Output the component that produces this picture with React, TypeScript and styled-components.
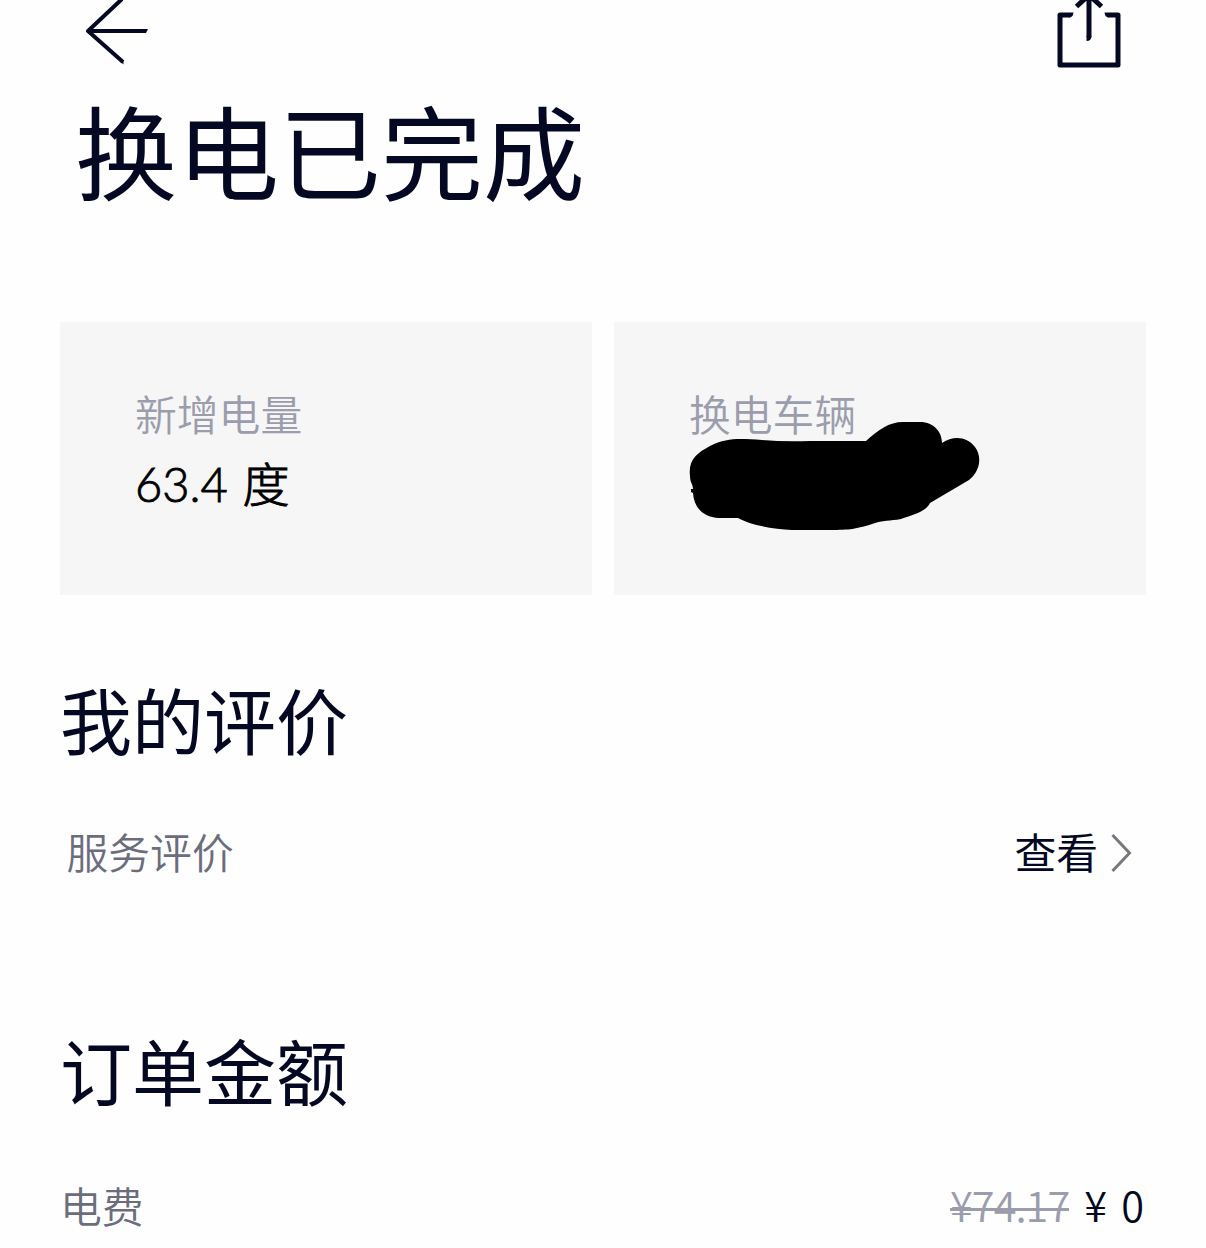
import styled, { createGlobalStyle } from "styled-components";

const GlobalStyle = createGlobalStyle`
  * {
    box-sizing: border-box;
  }

  body {
    margin: 0;
    background-color: #fefefe;
    overflow: hidden;
  }
`;

const Wrapper = styled.div`
  width: 1206px;
  height: 1248px;
  overflow: hidden;
  background-color: #fefefe;
  color: #040822;
  font-family: "Noto Sans CJK SC", sans-serif;
  font-weight: 400;
  white-space: nowrap;
`;

const TopBar = styled.header`
  height: 81px;
  padding: 0 77px 0 80px;
  display: flex;
  justify-content: space-between;
`;

const IconButton = styled.button`
  width: 72px;
  height: 80px;
  padding: 0;
  border: none;
  background: none;
  color: inherit;

  svg {
    display: block;
  }
`;

const Title = styled.h1`
  margin: 0;
  padding-left: 75px;
  height: 241px;
  font-size: 102px;
  font-weight: 400;
  line-height: 136px;
`;

const Cards = styled.div`
  padding: 0 60px;
  display: grid;
  grid-template-columns: 1fr 1fr;
  gap: 22px;
`;

const Card = styled.div`
  height: 273px;
  padding: 60px 75px;
  background-color: #f6f6f6;
`;

const CardLabel = styled.div`
  height: 62px;
  color: #9b9dac;
  font-size: 41.8px;
  font-weight: 350;
  line-height: 62px;
`;

const CardValue = styled.div`
  height: 80px;
  color: #000;
  font-family: Lato, "Noto Sans CJK SC", sans-serif;
  font-size: 47px;
  font-weight: 300;
  line-height: 80px;
  word-spacing: 2px;
  -webkit-text-stroke: 0.9px #000;
`;

// sits over the lower part of the card, touching the label
const Scribble = styled.svg`
  display: block;
  margin: -27px 0 0 -4px;
`;

const Section = styled.section`
  padding: 73px 60px 0;
  height: 351px;
`;

const SectionTitle = styled.h2`
  margin: 0;
  height: 100px;
  font-size: 72px;
  font-weight: 400;
  line-height: 100px;
`;

const Row = styled.div<{ $inset?: number; $top: number }>`
  margin-top: ${({ $top }) => $top}px;
  padding-left: ${({ $inset }) => $inset ?? 0}px;
  height: 60px;
  display: flex;
  align-items: center;
  justify-content: space-between;
  font-size: 41.8px;
  line-height: 60px;
`;

const RowLabel = styled.span`
  color: #6b6d7d;
  font-weight: 350;
`;

const Link = styled.a`
  display: flex;
  align-items: center;
  gap: 12px;
  padding-right: 12px;
`;

const Price = styled.span`
  display: flex;
  gap: 15px;
  padding: 0 2px 2px 0;
  font-size: 41.5px;
  font-weight: 350;
  word-spacing: 5px;
`;

const OldPrice = styled.del`
  color: #9b9dac;
  letter-spacing: -1px;
  text-decoration: none;
  background: linear-gradient(#9b9dac, #9b9dac) 0 34px / 100% 3px no-repeat;
`;

function Main() {
  return (
    <Wrapper>
      <GlobalStyle />
      <TopBar>
        <IconButton aria-label="返回">
          <svg width="72" height="80" fill="none" stroke="currentColor" strokeWidth="4">
            <path d="M42-1L8 31L43 62" strokeLinejoin="round" />
            <path d="M8 31H66" />
            <path d="M64 29H68L66 33H64ZM41 60L43.500 61V64.500L41 62Z" fill="currentColor" stroke="none" />
          </svg>
        </IconButton>
        <IconButton aria-label="分享">
          <svg width="72" height="80" fill="none" stroke="currentColor" strokeWidth="5">
            <path d="M13 15H3V65H61V15H51" strokeLinejoin="round" />
            <path d="M32-5V37M19.500 6.500L32-5L44.500 6.500" />
            <path d="M13 12.500H16.500Q16 17.500 12 17.500ZM51 12.500H47.500Q48 17.500 52 17.500ZM29.500 36H34.500Q34.500 41 29.500 41Z" fill="currentColor" stroke="none" />
          </svg>
        </IconButton>
      </TopBar>
      <Title>换电已完成</Title>
      <Cards>
        <Card>
          <CardLabel>新增电量</CardLabel>
          <CardValue>63.4 度</CardValue>
        </Card>
        <Card>
          <CardLabel>换电车辆</CardLabel>
          <Scribble width="300" height="120" viewBox="685 417 300 120">
            <path d="M690 476C688 460 697 453 710 446C728 437 741 439 762 440Q785 442 810 441H866C878 430 889 422 903 422H920C934 422 942 432 942 443C954 435 967 437 975 447C983 458 979 472 969 480L930 503C926 512 912 515 901 519C890 521 883 520 872 524C856 529 850 530 830 530H792C773 529 750 525 738 518H719C703 517 694 508 693 493L691 492V489H693C693 484 690 483 690 476Z" />
          </Scribble>
        </Card>
      </Cards>
      <Section>
        <SectionTitle>我的评价</SectionTitle>
        <Row $top={53} $inset={6.5}>
          <RowLabel>服务评价</RowLabel>
          <Link>
            查看
            <svg width="24" height="42" fill="none" stroke="#77787f" strokeWidth="3">
              <path d="M2.500 5L19.500 23L2.500 41" />
            </svg>
          </Link>
        </Row>
      </Section>
      <Section>
        <SectionTitle>订单金额</SectionTitle>
        <Row $top={56}>
          <RowLabel>电费</RowLabel>
          <Price>
            <OldPrice>¥74.17</OldPrice>
            <span>¥ 0</span>
          </Price>
        </Row>
      </Section>
    </Wrapper>
  );
}

export default Main;
